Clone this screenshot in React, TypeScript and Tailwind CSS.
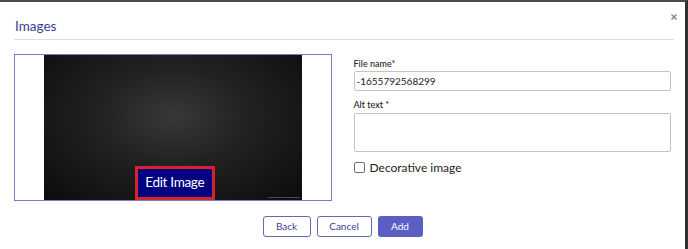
export default function App() {
  return (
    <div className="w-[688px] h-[249px] bg-white border-t-2 border-t-[#4b4b4b] border-r-[3px] border-r-[#2e3038] flex flex-col font-[Lato,sans-serif] overflow-hidden">
      <div className="flex justify-between items-start pl-[15px] pr-[8px] h-[37px]">
        <h1 className="pt-[16px] text-[13.5px] leading-[16px] text-[#3a3c93]">Images</h1>
        <button className="mt-[12px] w-[6px] h-[6px] flex items-center justify-center">
          <svg width="6" height="6" viewBox="0 0 6 6">
            <path d="M0.5 0.5L5.5 5.5M5.5 0.5L0.5 5.5" stroke="#8a8a8a" strokeWidth="1.5" />
          </svg>
        </button>
      </div>
      <div className="ml-[14px] mr-[11px] h-px bg-[#e0e0e0]" />
      <div className="flex gap-[22px] px-[14px] mt-[14px]">
        <div className="w-[318px] h-[147px] border border-[#7b7cc0] flex justify-center bg-white">
          <div className="w-[258px] h-full relative bg-[radial-gradient(ellipse_at_50%_42%,#383838_0%,#222222_40%,#0c0c0c_100%)]">
            <div className="absolute left-[224px] bottom-[2px] w-[32px] h-px bg-[#4a4a4a]" />
            <div className="absolute left-[91px] bottom-0 w-[80px] h-[34px] border-[3px] border-[#d7212c] bg-[#000080] flex items-center justify-center">
              <span className="text-[13.5px] leading-none text-white tracking-[-0.3px]">Edit Image</span>
            </div>
          </div>
        </div>
        <div className="w-[318px] flex flex-col">
          <label className="mt-[4px] mb-[1px] text-[9px] leading-[12px] text-[#222] font-medium">File name*</label>
          <div className="h-[20px] border border-[#c4c4c4] rounded-[2px] px-[2px] flex items-center text-[10px] text-[#222]">-1655792568299</div>
          <label className="mt-[8px] mb-[2px] text-[9px] leading-[12px] text-[#222] font-medium">Alt text *</label>
          <div className="h-[39px] border border-[#c4c4c4] rounded-[2px]" />
          <div className="mt-[10px] flex items-center gap-[5px]">
            <div className="w-[11px] h-[11px] border border-[#6e6e6e] rounded-[2px] bg-white" />
            <span className="text-[12px] leading-[11px] text-[#222]">Decorative image</span>
          </div>
        </div>
      </div>
      <div className="flex justify-center gap-[6px] mt-[15px]">
        <button className="w-[48px] h-[21px] rounded-[3px] border border-[#6668b0] text-[10px] text-[#3b3d8f] bg-white">Back</button>
        <button className="w-[55px] h-[21px] rounded-[3px] border border-[#6668b0] text-[10px] text-[#3b3d8f] bg-white">Cancel</button>
        <button className="w-[45px] h-[21px] rounded-[3px] bg-[#5b5ec2] text-[10px] text-white">Add</button>
      </div>
    </div>
  );
}
